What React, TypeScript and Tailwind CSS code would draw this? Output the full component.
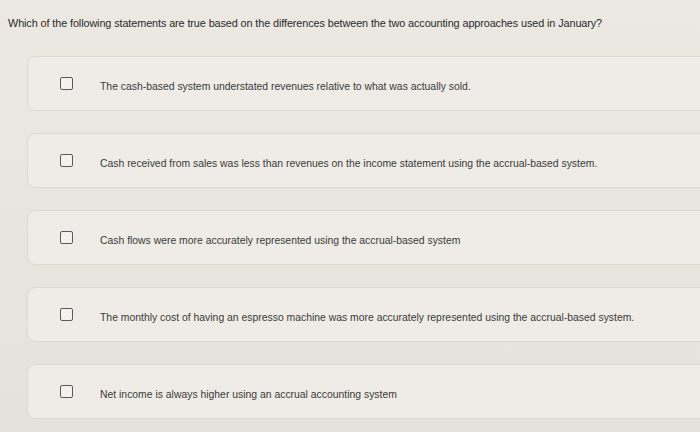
const options = [
  "The cash-based system understated revenues relative to what was actually sold.",
  "Cash received from sales was less than revenues on the income statement using the accrual-based system.",
  "Cash flows were more accurately represented using the accrual-based system",
  "The monthly cost of having an espresso machine was more accurately represented using the accrual-based system.",
  "Net income is always higher using an accrual accounting system",
];

export default function App() {
  return (
    <div className="w-[700px] h-[432px] overflow-hidden bg-gradient-to-b from-[#ece9e3] to-[#e5e2dc] font-['Liberation_Sans',Arial,sans-serif]">
      <p className="pt-[15px] pl-[8px] text-[10.85px] text-[#2a2a2a] tracking-[-0.1px]">
        Which of the following statements are true based on the differences between the two accounting approaches used in January?
      </p>
      <div className="mt-[25px] flex flex-col gap-[22px] pl-[27px]">
        {options.map((text, i) => (
          <div
            key={i}
            className="h-[55px] w-[720px] shrink-0 rounded-l-lg border border-[#dcd9d3] bg-[#efece7] flex items-center"
          >
            <span className="ml-[32px] w-[13px] h-[13px] rounded-[2px] border-[1.5px] border-[#5a5a5a] bg-[#f4f2ee] shrink-0" />
            <span className="ml-[27px] mt-[7px] text-[10.4px] text-[#3a3a3a] whitespace-nowrap">{text}</span>
          </div>
        ))}
      </div>
    </div>
  );
}
